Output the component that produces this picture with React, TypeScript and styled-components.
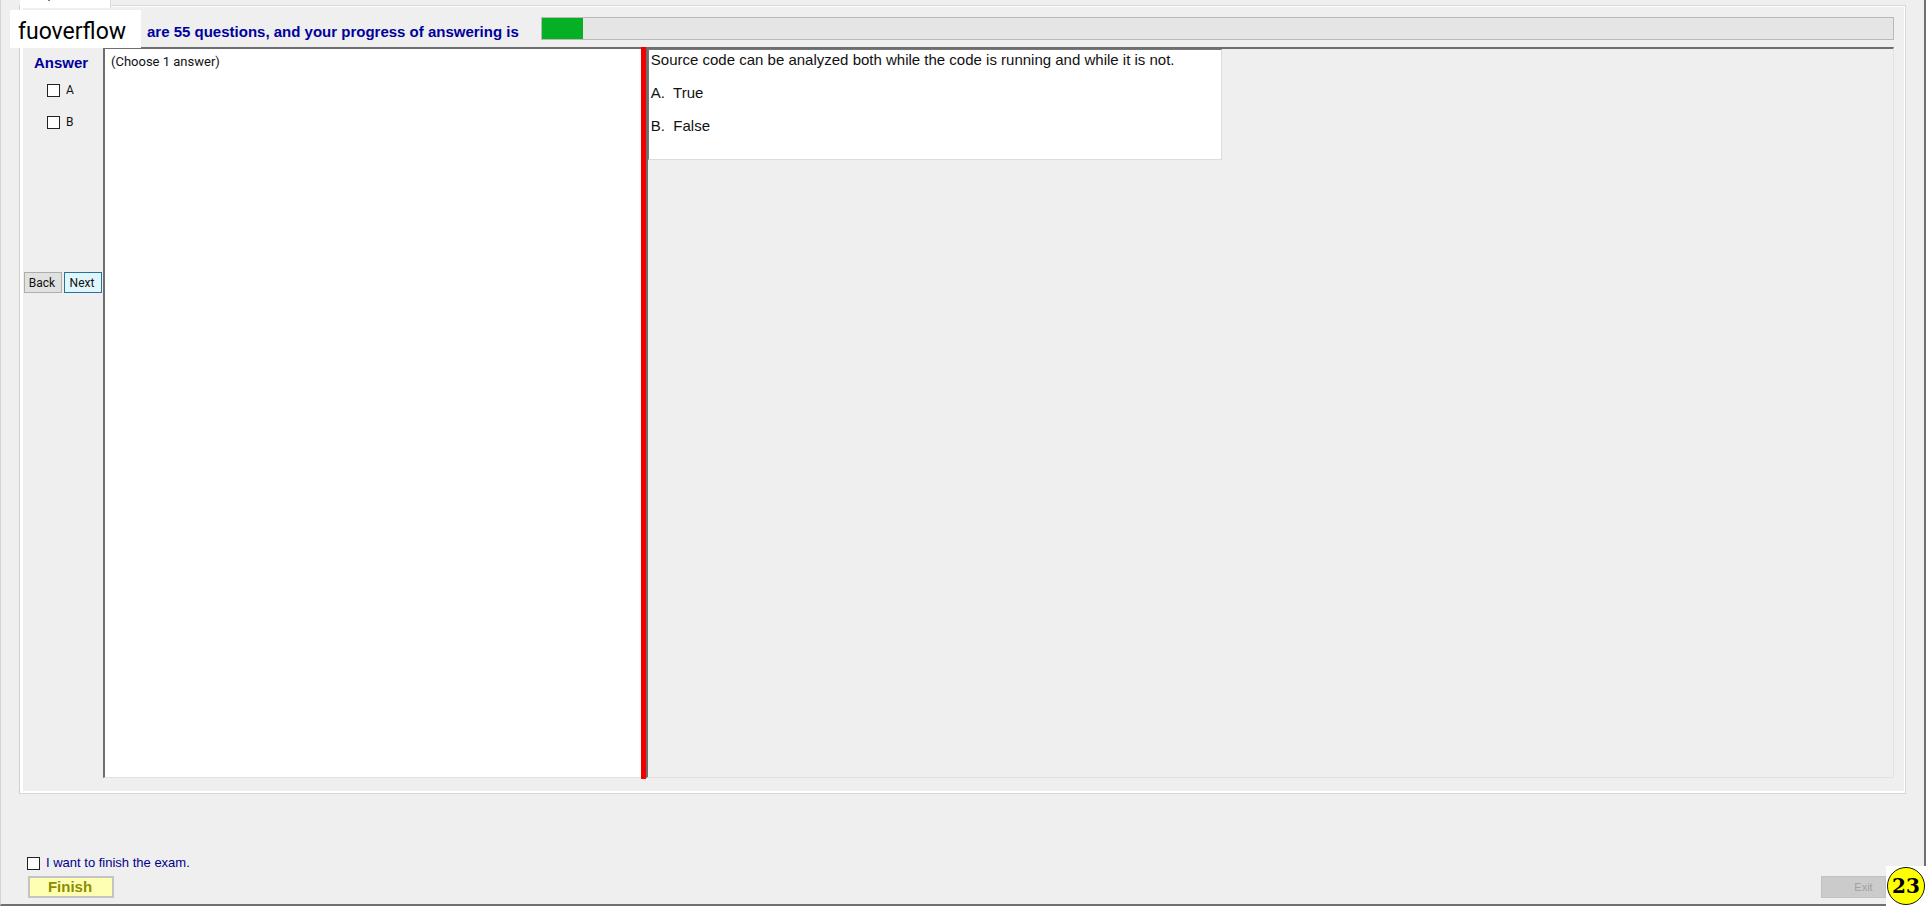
import React, { useState } from "react";
import styled, { createGlobalStyle } from "styled-components";

const GlobalStyle = createGlobalStyle`
  *, *::before, *::after { box-sizing: border-box; }
  body { margin: 0; background: #efefef; }
  button, input { font: inherit; margin: 0; }
`;

const sans = `"Liberation Sans", Arial, sans-serif`;
const roboto = `Roboto, "Liberation Sans", sans-serif`;

const Window = styled.div`
  position: relative;
  display: flex;
  flex-direction: column;
  min-height: 100vh;
  padding: 0 18px 6px 18px;
  background: #efefef;
  border-left: 1px solid #d4d4d4;
  border-right: 2px solid #707070;
  border-bottom: 2px solid #707070;
  font-family: ${sans};
  font-size: 11px;
  color: #111;
`;

const TabStrip = styled.div`
  display: flex;
  height: 5px;
  padding-left: 1px;
`;

const Tab = styled.div`
  position: relative;
  width: 91px;
  height: 8px;
  background: #fff;
  border-right: 1px solid #dcdcdc;

  &::after {
    content: "";
    position: absolute;
    left: 28px;
    top: 0;
    width: 2px;
    height: 1px;
    background: #777;
  }
`;

const TabPage = styled.main`
  flex: 1;
  display: flex;
  flex-direction: column;
  padding: 11px 11px 15px 0;
  border: 1px solid #d9d9d9;
  border-left-color: #d0d0d0;
  box-shadow: inset 3px 0 #fff, inset 0 -2px #fff, inset -1px 0 #fff, inset 0 1px #fff;
`;

const ProgressRow = styled.div`
  display: flex;
  align-items: center;
  height: 23px;
  padding-left: 127px;
  margin-bottom: 7px;
`;

const Caption = styled.label`
  width: 394px;
  padding-top: 7px;
  color: #00009c;
  font-size: 15px;
  font-weight: 700;
  line-height: 18px;
  white-space: nowrap;
`;

const Bar = styled.div`
  flex: 1;
  height: 23px;
  background: #e5e5e5;
  border: 1px solid #b9b9b9;
`;

const BarFill = styled.div`
  height: 21px;
  background: #06b025;
`;

const Body = styled.div`
  flex: 1;
  display: flex;
`;

const AnswerColumn = styled.section`
  width: 83px;
  padding: 7px 0 0 4px;
  display: flex;
  flex-direction: column;
`;

const AnswerTitle = styled.h2`
  margin: 0 0 10px 10px;
  color: #00009c;
  font-size: 15px;
  line-height: 18px;
`;

const CheckLabel = styled.label`
  display: flex;
  align-items: center;
  gap: 6px;
`;

const OptionLabel = styled(CheckLabel)`
  height: 16px;
  margin: 0 0 16px 23px;
  font-family: ${roboto};
  font-size: 12px;
`;

const CheckBox = styled.input`
  appearance: none;
  width: 13px;
  height: 13px;
  background: #fff;
  border: 1px solid #222;

  &:checked { background: #222; box-shadow: inset 0 0 0 2px #fff; }
`;

const NavRow = styled.div`
  display: flex;
  gap: 2px;
  margin-top: 126px;
`;

const NavButton = styled.button<{ $focused?: boolean }>`
  width: 38px;
  height: 21px;
  padding: 0 2px 0 0;
  font-family: ${roboto};
  font-size: 12px;
  color: #111;
  background: ${(p) => (p.$focused ? "#e0f6fd" : "#e1e1e1")};
  border: 1px solid ${(p) => (p.$focused ? "#2b7191" : "#adadad")};
`;

const Sunken = styled.section`
  border: 1px solid #e2e2e2;
  border-top: 2px solid #6e6e6e;
  border-left: 2px solid #6e6e6e;
`;

const HintPane = styled(Sunken)`
  flex: 0 0 28.7%;
  padding: 3px 6px;
  background: #fff;
  border-right: 0;
  font-family: ${roboto};
  font-size: 13px;
  line-height: 20px;
`;

const Splitter = styled.div`
  width: 5px;
  margin-bottom: -1px;
  background: #ee0000;
`;

const QuestionPane = styled(Sunken)`
  flex: 1;
`;

const QuestionCard = styled.div`
  width: 574px;
  max-width: 100%;
  padding: 0 2px 10px;
  background: #fff;
  border: 1px solid #dcdcdc;
  border-top-color: #777;
  border-left-color: #777;
  font-size: 15px;
  line-height: 19px;
`;

const Line = styled.p`
  margin: 0 0 14px;
  white-space: pre-wrap;
`;

const Footer = styled.footer`
  padding: 59px 20px 0 8px;
`;

const FinishLabel = styled(CheckLabel)`
  color: #00008c;
  font-size: 13px;
  line-height: 20px;
`;

const Actions = styled.div`
  display: flex;
  justify-content: space-between;
  padding-top: 3px;
`;

const FinishButton = styled.button`
  width: 86px;
  height: 22px;
  margin-left: 1px;
  padding: 0 2px 0 0;
  color: #8c8c00;
  background: #ffffb4;
  border: 2px solid #c4c4c4;
  font-size: 15px;
  font-weight: 700;
  line-height: 18px;
`;

const ExitButton = styled.button`
  width: 65px;
  height: 22px;
  padding: 0 0 0 20px;
  color: #a0a0a0;
  background: #cbcbcb;
  border: 1px solid #c2c2c2;
`;

const Watermark = styled.div`
  position: absolute;
  left: 9px;
  top: 10px;
  width: 131px;
  height: 38px;
  padding-left: 8px;
  background: #fff;
  color: #000;
  font-family: ${roboto};
  font-size: 23px;
  line-height: 44px;
`;

const BadgeCorner = styled.div`
  position: absolute;
  right: -2px;
  bottom: -2px;
  display: grid;
  place-items: center;
  width: 40px;
  height: 40px;
  background: #fff;
`;

const Badge = styled.div`
  width: 38px;
  height: 38px;
  border: 1px solid #111;
  border-radius: 50%;
  background: #ffff00;
  color: #000;
  font-family: "DejaVu Serif", serif;
  font-size: 20px;
  font-weight: 700;
  line-height: 36px;
  text-align: center;
`;

const progress = 3;

export default function App() {
  const [selected, setSelected] = useState<string[]>([]);
  const toggle = (key: string) =>
    setSelected((s) => (s.includes(key) ? s.filter((k) => k !== key) : [...s, key]));

  return (
    <>
      <GlobalStyle />
      <Window>
        <TabStrip>
          <Tab />
        </TabStrip>
        <TabPage>
          <ProgressRow>
            <Caption id="progress-caption">are 55 questions, and your progress of answering is</Caption>
            <Bar role="progressbar" aria-labelledby="progress-caption" aria-valuenow={progress}>
              <BarFill style={{ width: `${progress}%` }} />
            </Bar>
          </ProgressRow>
          <Body>
            <AnswerColumn>
              <AnswerTitle>Answer</AnswerTitle>
              {["A", "B"].map((key) => (
                <OptionLabel key={key}>
                  <CheckBox type="checkbox" checked={selected.includes(key)} onChange={() => toggle(key)} />
                  {key}
                </OptionLabel>
              ))}
              <NavRow>
                <NavButton type="button">Back</NavButton>
                <NavButton type="button" $focused>Next</NavButton>
              </NavRow>
            </AnswerColumn>
            <HintPane>(Choose 1 answer)</HintPane>
            <Splitter />
            <QuestionPane>
              <QuestionCard>
                <Line>Source code can be analyzed both while the code is running and while it is not.</Line>
                <Line>{"A.  True"}</Line>
                <Line>{"B.  False"}</Line>
              </QuestionCard>
            </QuestionPane>
          </Body>
        </TabPage>
        <Footer>
          <FinishLabel>
            <CheckBox type="checkbox" />
            I want to finish the exam.
          </FinishLabel>
          <Actions>
            <FinishButton type="button">Finish</FinishButton>
            <ExitButton type="button" disabled>Exit</ExitButton>
          </Actions>
        </Footer>
        <Watermark>fuoverflow</Watermark>
        <BadgeCorner>
          <Badge>23</Badge>
        </BadgeCorner>
      </Window>
    </>
  );
}
